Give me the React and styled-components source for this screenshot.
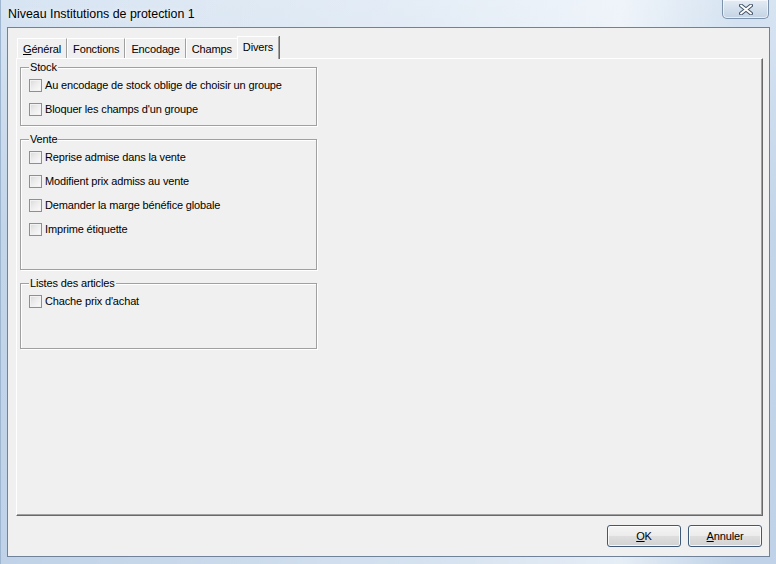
import React from "react";
import styled, { createGlobalStyle } from "styled-components";

const Global = createGlobalStyle`
  html, body { margin: 0; padding: 0; background: #c9daec; }
  body { font-family: "Liberation Sans", Arial, sans-serif; }
  * { box-sizing: border-box; }
`;

const Window = styled.div`
  width: 776px;
  height: 564px;
  display: flex;
  flex-direction: column;
  padding: 0 6px 7px 6px;
  background:
    linear-gradient(to right, rgba(255,255,255,0) 0%, rgba(255,255,255,0.35) 55%, rgba(255,255,255,0.6) 80%, rgba(255,255,255,0) 95%),
    linear-gradient(to bottom, #d7e4f2 0%, #c3d5e9 40%, #bfd2e7 100%);
  border-left: 1px solid #9fb6d0;
  overflow: hidden;
`;

const TitleBar = styled.div`
  height: 27px;
  flex: 0 0 27px;
  display: flex;
  align-items: flex-start;
  justify-content: space-between;
`;

const Title = styled.div`
  font-family: "Liberation Sans", Arial, sans-serif;
  font-size: 12.4px;
  color: #000;
  padding: 7px 0 0 1px;
  line-height: 14px;
  text-shadow: 0 0 6px rgba(255,255,255,0.9);
`;

const CloseButton = styled.div`
  width: 47px;
  height: 19px;
  margin-right: 1px;
  border: 1px solid #7d92ab;
  border-top: none;
  border-radius: 0 0 5px 5px;
  background: linear-gradient(to bottom, #e4ecf5 0%, #d3dfec 50%, #c4d3e4 100%);
  box-shadow: inset 0 0 0 1px rgba(255,255,255,0.6);
  display: flex;
  align-items: center;
  justify-content: center;
`;

const Client = styled.div`
  flex: 1;
  display: flex;
  flex-direction: column;
  background: #f0f0f0;
  border: 1px solid #6f8299;
  padding: 8px 6px 9px 8px;
`;

const TabStrip = styled.div`
  height: 22px;
  flex: 0 0 22px;
  display: flex;
  align-items: flex-end;
  padding-left: 1px;
`;

const Tab = styled.div`
  position: relative;
  height: ${(p) => (p.$active ? "23px" : "20px")};
  margin-bottom: ${(p) => (p.$active ? "-1px" : "0")};
  margin-left: ${(p) => (p.$active ? "-1px" : "0")};
  padding: ${(p) => (p.$active ? "0 5px 3px 5px" : "0 5px")};
  z-index: ${(p) => (p.$active ? 1 : 0)};
  display: flex;
  align-items: center;
  font-size: 11px;
  letter-spacing: -0.15px;
  color: #000;
  background: #f0f0f0;
  border-top: 1px solid #ffffff;
  border-left: 1px solid #ffffff;
  border-right: 1px solid #a0a0a0;
  box-shadow: ${(p) => (p.$active ? "1px 0 0 #696969" : "none")};
  white-space: nowrap;
`;

const Mn = styled.span`
  text-decoration: underline;
`;

const Panel = styled.div`
  flex: 1;
  border-top: 1px solid #ffffff;
  border-left: 1px solid #ffffff;
  border-right: 1px solid #696969;
  border-bottom: 1px solid #696969;
  box-shadow: inset -1px -1px 0 #a0a0a0;
  padding: 8px 3px;
  display: flex;
  flex-direction: column;
  gap: 13px;
`;

const GroupBox = styled.div`
  position: relative;
  width: 297px;
  height: ${(p) => p.$h}px;
  border: 1px solid #a0a0a0;
  box-shadow: inset 1px 1px 0 #ffffff, 1px 1px 0 #ffffff;
  padding: 5px 8px 0 8px;
  display: flex;
  flex-direction: column;
`;

const Legend = styled.div`
  position: absolute;
  top: -7px;
  left: 8px;
  padding: 0 1px;
  font-size: 11px;
  letter-spacing: -0.15px;
  line-height: 13px;
  background: #f0f0f0;
  color: #000;
`;

const Row = styled.label`
  height: 24px;
  display: flex;
  align-items: center;
  gap: 3px;
  font-size: 11px;
  letter-spacing: -0.15px;
  color: #000;
  white-space: nowrap;
`;

const Check = styled.span`
  width: 13px;
  height: 13px;
  flex: 0 0 13px;
  border: 1px solid #8e8f8f;
  background: linear-gradient(135deg, #d8d8d8 0%, #ececec 45%, #fbfbfb 100%);
  box-shadow: inset 0 0 0 1px #f2f2f2;
`;

const Footer = styled.div`
  display: flex;
  justify-content: flex-end;
  gap: 7px;
  margin-top: 9px;
  padding-right: 1px;
`;

const Button = styled.div`
  width: 74px;
  height: 22px;
  border: 1px solid #3e5a78;
  border-radius: 3px;
  background: linear-gradient(to bottom, #f4f4f4 0%, #ececec 48%, #dedede 52%, #d2d2d2 100%);
  box-shadow: inset 0 0 0 1px rgba(255,255,255,0.8);
  display: flex;
  align-items: center;
  justify-content: center;
  font-size: 11px;
  letter-spacing: -0.15px;
  color: #000;
`;

const CloseIcon = () => (
  <svg width="14" height="11" viewBox="0 0 14 11">
    <path d="M2 1.5 L12 9.5 M12 1.5 L2 9.5" stroke="#45566b" strokeWidth="4" strokeLinecap="round" />
    <path d="M2 1.5 L12 9.5 M12 1.5 L2 9.5" stroke="#ffffff" strokeWidth="2" strokeLinecap="round" />
  </svg>
);

const groups = [
  { title: "Stock", h: 59, items: ["Au encodage de stock oblige de choisir un groupe", "Bloquer les champs d'un groupe"] },
  { title: "Vente", h: 131, items: ["Reprise admise dans la vente", "Modifient prix admiss au vente", "Demander la marge bénéfice globale", "Imprime étiquette"] },
  { title: "Listes des articles", h: 66, items: ["Chache prix d'achat"] },
];

export default function App() {
  return (
    <>
      <Global />
      <Window>
        <TitleBar>
          <Title>Niveau Institutions de protection 1</Title>
          <CloseButton><CloseIcon /></CloseButton>
        </TitleBar>
        <Client>
          <TabStrip>
            <Tab><span><Mn>G</Mn>énéral</span></Tab>
            <Tab>Fonctions</Tab>
            <Tab>Encodage</Tab>
            <Tab>Champs</Tab>
            <Tab $active>Divers</Tab>
          </TabStrip>
          <Panel>
            {groups.map((g) => (
              <GroupBox key={g.title} $h={g.h}>
                <Legend>{g.title}</Legend>
                {g.items.map((it) => (
                  <Row key={it}>
                    <Check />
                    <span>{it}</span>
                  </Row>
                ))}
              </GroupBox>
            ))}
          </Panel>
          <Footer>
            <Button><span><Mn>O</Mn>K</span></Button>
            <Button><span><Mn>A</Mn>nnuler</span></Button>
          </Footer>
        </Client>
      </Window>
    </>
  );
}
